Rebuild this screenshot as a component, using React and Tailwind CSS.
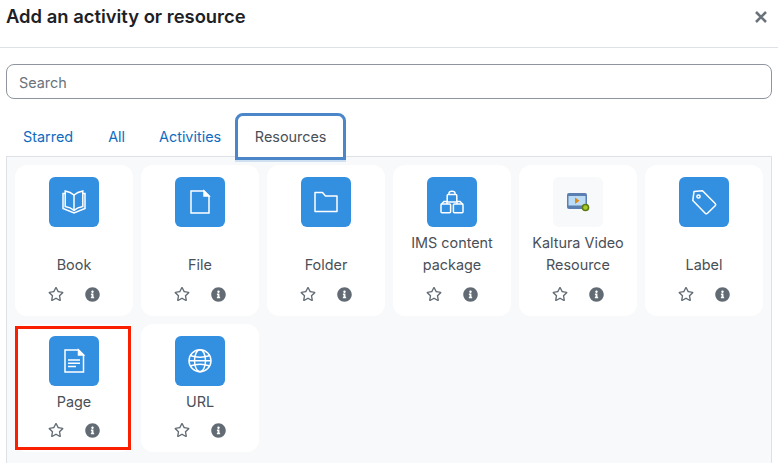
import React from 'react';
import { FaRegStar, FaInfoCircle } from 'react-icons/fa';

const BookIcon = () => (
  <g>
    <path d="M25 18C22.5 15.8 19.5 14.6 16.2 14V29.5C19.5 30 22.5 31.2 25 33.4C27.5 31.2 30.5 30 33.8 29.5V14C30.5 14.6 27.5 15.8 25 18Z" />
    <path d="M25 18V33.4" />
    <path d="M16.2 16.5H14V31.5L25 36L36 31.5V16.5H33.8" />
  </g>
);

const FileIcon = () => (
  <g>
    <path d="M16 14H29L34 19V36H16Z" />
    <path d="M29 14L34 19H29Z" fill="white" />
  </g>
);

const FolderIcon = () => <path d="M14 15.5H21.5L24.5 19H36V34.5H14Z" strokeLinejoin="round" />;

const PackageIcon = () => (
  <g>
    <path d="M22 18V16C22 13.5 28 13.5 28 16V18" />
    <rect x="20.2" y="17.5" width="9.6" height="7.5" rx="1" />
    <path d="M14 27.5L17 24.5H20V27" />
    <rect x="14" y="27" width="9.6" height="8.8" rx="1" />
    <path d="M36 27.5L33 24.5H30V27" />
    <rect x="26.4" y="27" width="9.6" height="8.8" rx="1" />
  </g>
);

const KalturaIcon = () => (
  <g stroke="none">
    <rect x="14" y="16" width="20" height="16" rx="2" fill="#5a7fb0" />
    <rect x="15.5" y="19" width="17" height="9.5" fill="#bcdcf5" />
    <path d="M22 20.5L26.5 23.7L22 27Z" fill="#d98a1f" />
    <circle cx="32.5" cy="30.5" r="3.8" fill="#5c7a12" />
    <circle cx="32.5" cy="30.5" r="2.3" fill="#a5cc2a" />
  </g>
);

const LabelIcon = () => (
  <g>
    <path d="M15 14.5L23.5 13.8L36.2 26.5C37 27.3 37 28 36.2 28.8L28.5 36.2C27.7 37 27 37 26.2 36.2L13.8 23.5Z" strokeLinejoin="round" />
    <circle cx="19.5" cy="19.5" r="1.6" />
  </g>
);

const PageIcon = () => (
  <g>
    <path d="M16 14H29.5L34.5 19V36H16Z" />
    <path d="M29.5 14L34.5 19H29.5Z" fill="white" />
    <path d="M19 24H31M19 27.2H31M19 30.4H27" />
  </g>
);

const GlobeIcon = () => (
  <g>
    <circle cx="25" cy="24.7" r="11" />
    <ellipse cx="25" cy="24.7" rx="5.5" ry="11" />
    <path d="M15 19.5C21 21.5 29 21.5 35 19.5M15 30C21 28 29 28 35 30M14 24.7H36" />
  </g>
);

const items = [
  { name: 'Book', icon: BookIcon },
  { name: 'File', icon: FileIcon },
  { name: 'Folder', icon: FolderIcon },
  { name: 'IMS content package', icon: PackageIcon },
  { name: 'Kaltura Video Resource', icon: KalturaIcon, plain: true },
  { name: 'Label', icon: LabelIcon },
  { name: 'Page', icon: PageIcon, marked: true, compact: true },
  { name: 'URL', icon: GlobeIcon, compact: true },
];

const Card = ({ item }) => {
  const Icon = item.icon;
  return (
    <div className="relative flex flex-col items-center rounded-xl bg-white px-2 pt-3">
      <div className={`h-[50px] w-[50px] rounded-md ${item.plain ? 'bg-[#f8f9fa]' : 'bg-[#338fe0]'}`}>
        <svg viewBox="0 0 50 50" className="h-[50px] w-[50px]" fill="none" stroke="white" strokeWidth="1.5">
          <Icon />
        </svg>
      </div>
      <div className={`mt-[5px] flex items-end text-center text-[14.4px] leading-[22px] text-[#495057] ${item.compact ? '' : 'min-h-[44px]'}`}>
        {item.name}
      </div>
      <div className={`flex items-center gap-[21px] pr-[1px] text-[#626b74] ${item.compact ? 'mt-[9px]' : 'mt-[10px]'}`}>
        <FaRegStar className="h-[16px] w-[16px]" />
        <FaInfoCircle className="h-[15px] w-[15px]" />
      </div>
      {item.marked && (
        <div className="absolute top-[2px] left-0 h-[124px] w-[116px] border-[3px] border-[#f91f00]" />
      )}
    </div>
  );
};

export default function App() {
  return (
    <div className="h-[463px] w-[778px] overflow-hidden bg-white font-['Inter',sans-serif]">
      <header className="flex h-[48px] items-start justify-between border-b border-[#dee2e6] pr-[11px] pl-[6px]">
        <h1 className="mt-[3px] text-[18.4px] leading-[26px] font-semibold text-[#1d2125]">Add an activity or resource</h1>
        <svg viewBox="0 0 12 12" className="mt-[11px] h-[12px] w-[12px]" stroke="#6a737b" strokeWidth="2.6">
          <path d="M1 1L11 11M11 1L1 11" />
        </svg>
      </header>

      <div className="mx-[6px] mt-[16px] flex h-[35px] items-center rounded-lg border border-[#8f959e] px-[12px] pt-[2px] text-[14.4px] text-[#6a737b]">
        Search
      </div>

      <nav className="relative z-10 mt-[14px] -mb-[4px] ml-[6px] flex h-[47px] items-center text-[14.4px] text-[#0f6cbf]">
        <a className="pt-[1px] pr-[17px] pl-[17px]">Starred</a>
        <a className="pt-[1px] pr-[17px] pl-[18px]">All</a>
        <a className="pt-[1px] pr-[14px] pl-[17px]">Activities</a>
        <a className="flex h-[47px] w-[111px] items-center justify-center rounded-t-lg border-[3px] border-[#4a86c8] bg-white pt-[1px] text-[#495057] shadow-[0_2px_0_0_#cfe0f3]">
          Resources
        </a>
      </nav>

      <div className="mx-[6px] h-[400px] border border-[#dee2e6] bg-[#f8f9fa] pt-[8px] pl-[8px]">
        <div className="grid grid-cols-[repeat(6,118px)] grid-rows-[151px_128px] gap-2">
          {items.map((item) => (
            <Card key={item.name} item={item} />
          ))}
        </div>
      </div>
    </div>
  );
}
